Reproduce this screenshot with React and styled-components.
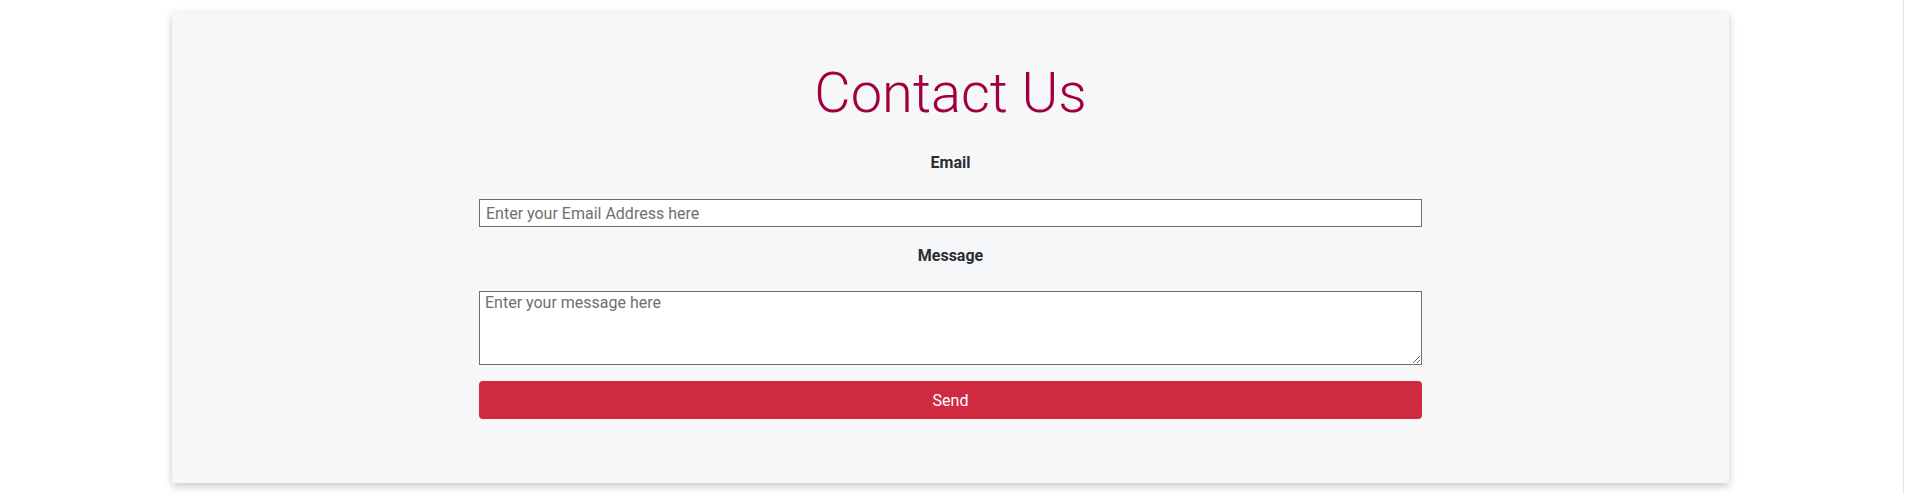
import styled, { createGlobalStyle } from "styled-components";

const GlobalStyle = createGlobalStyle`
    html, body {
        margin: 0;
        height: 494px;
        overflow: hidden;
    }
    body {
        background: #ffffff;
        font-family: Roboto, "Liberation Sans", sans-serif;
        color: #212529;
    }
`;

const Page = styled.div`
    display: flex;
    height: 494px;
    overflow: hidden;
`;

const Main = styled.main`
    flex: 1;
    padding-top: 12px;
`;

const Gutter = styled.div`
    width: 2px;
    border-left: 1px solid #e4e4e4;
`;

const Card = styled.section`
    width: 1557px;
    margin-left: 172px;
    box-sizing: border-box;
    padding: 48px 0 64px;
    background: #f6f7f9;
    box-shadow: 0 3px 8px rgba(0, 0, 0, 0.22);
    display: flex;
    flex-direction: column;
    align-items: center;
`;

const Title = styled.h1`
    margin: 0;
    font-size: 56px;
    font-weight: 300;
    line-height: 67px;
    color: #a3003b;
`;

const Form = styled.form`
    width: 943px;
    display: flex;
    flex-direction: column;
`;

const Label = styled.label`
    display: block;
    text-align: center;
    font-size: 16px;
    font-weight: 700;
    line-height: 24px;
    color: #2a2d31;
    margin: ${p => p.$top}px 0 ${p => p.$bottom}px;
`;

const fieldBase = `
    box-sizing: border-box;
    width: 100%;
    border: 1px solid #6e6e6e;
    border-radius: 0;
    background: #ffffff;
    font-family: Roboto, "Liberation Sans", sans-serif;
    font-size: 16px;
    color: #212529;
    &::placeholder {
        color: #6f6f6f;
    }
`;

const Input = styled.input`
    ${fieldBase}
    display: block;
    height: 28px;
    padding: 0 6px;
`;

const TextArea = styled.textarea`
    ${fieldBase}
    display: block;
    height: 74px;
    padding: 1px 5px;
    line-height: 20px;
`;

const SendButton = styled.button`
    margin-top: 16px;
    height: 38px;
    border: none;
    border-radius: 4px;
    background: #cf2a40;
    color: #ffffff;
    font-family: Roboto, "Liberation Sans", sans-serif;
    font-size: 16px;
    font-weight: 400;
    cursor: pointer;
`;

const App = () => {
    return (
        <Page>
            <GlobalStyle />
            <Main>
                <Card>
                    <Title>Contact Us</Title>
                    <Form onSubmit={e => e.preventDefault()}>
                        <Label htmlFor="email" $top={24} $bottom={24}>Email</Label>
                        <Input id="email" type="email" placeholder="Enter your Email Address here" />
                        <Label htmlFor="message" $top={17} $bottom={23}>Message</Label>
                        <TextArea id="message" placeholder="Enter your message here" />
                        <SendButton type="submit">Send</SendButton>
                    </Form>
                </Card>
            </Main>
            <Gutter />
        </Page>
    );
};

export default App;
